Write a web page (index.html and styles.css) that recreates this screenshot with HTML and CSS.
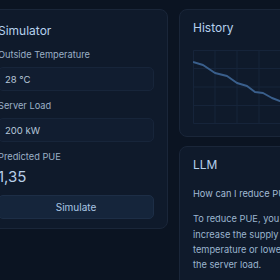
FILE: index.html
```html
<!DOCTYPE html>
<html>
  <head>
    <meta charset="utf-8" />
    <meta name="viewport" content="width=device-width, initial-scale=1" />
    <title>PUE Dashboard</title>
    <link rel="stylesheet" href="styles.css">
  </head>
  <body>
    <div class="dashboard">
      <div class="card simulator">
        <h2 class="card-title">Simulator</h2>

        <div class="field">
          <label class="field-label" for="tempInput">Outside Temperature</label>
          <input type="text" id="tempInput" class="field-input" value="28 °C" />
        </div>

        <div class="field">
          <label class="field-label" for="loadInput">Server Load</label>
          <input type="text" id="loadInput" class="field-input" value="200 kW" />
        </div>

        <div class="field-label">Predicted PUE</div>
        <div class="pue-value">1,35</div>

        <button class="simulate-btn">Simulate</button>
      </div>

      <div class="side">
        <div class="card history">
          <h2 class="card-title">History</h2>
          <svg class="chart" viewBox="0 0 100 74" preserveAspectRatio="none">
            <g class="grid">
              <line x1="22" y1="0" x2="22" y2="74" />
              <line x1="44" y1="0" x2="44" y2="74" />
              <line x1="66" y1="0" x2="66" y2="74" />
              <line x1="88" y1="0" x2="88" y2="74" />
              <line x1="0" y1="18.5" x2="100" y2="18.5" />
              <line x1="0" y1="37" x2="100" y2="37" />
              <line x1="0" y1="55.5" x2="100" y2="55.5" />
              <rect x="0.5" y="0.5" width="99" height="73" />
            </g>
            <polyline
              class="trend"
              points="0,12 10,15 22,23 34,26 44,33 54,36 62,42 70,43 79,48 87,51 95,54 100,55"
            />
          </svg>
        </div>

        <div class="card llm">
          <h2 class="card-title">LLM</h2>
          <p class="question">How can I reduce PUE?</p>
          <p class="answer">
            To reduce PUE, you increase the supply temperature or lower the
            server load.
          </p>
        </div>
      </div>
    </div>
  </body>
</html>
```

FILE: styles.css
```css
body {
  margin: 0;
  padding: 0;
  width: 280px;
  height: 280px;
  overflow: hidden;
  font-family: Inter, "Noto Sans", sans-serif;
  background: #0b1422;
  color: #9fb4ca;
}

.dashboard {
  display: flex;
  align-items: flex-start;
  gap: 11px;
  width: max-content;
  padding-top: 9px;
  margin-left: -16px;
}

.card {
  box-sizing: border-box;
  background: #0f1a2b;
  border: 1px solid #1a2639;
  border-radius: 8px;
}

.card-title {
  margin: 0;
  font-size: 12px;
  line-height: 15px;
  font-weight: 400;
  color: #b6d1ee;
}

.simulator {
  width: 184px;
  padding: 13px 13px 9px;
  display: flex;
  flex-direction: column;
}

.simulator .card-title {
  margin-bottom: 10px;
}

.field {
  margin-bottom: 8px;
}

.field-label {
  display: block;
  font-size: 9.25px;
  line-height: 13px;
  color: #9cb1c7;
  margin-bottom: 6px;
}

.field-input {
  display: block;
  width: 100%;
  height: 24px;
  box-sizing: border-box;
  padding: 0 6px;
  border: 1px solid #17253a;
  border-radius: 5px;
  background: #111d30;
  color: #b7c7d9;
  font-family: inherit;
  font-size: 9.5px;
  outline: none;
}

.pue-value {
  font-size: 15px;
  line-height: 18px;
  color: #b8cfe8;
  margin-top: -1px;
}

.simulate-btn {
  margin-top: 9px;
  height: 24px;
  border: 1px solid #1d2e46;
  border-radius: 5px;
  background: #15253b;
  color: #a9c5e4;
  font-family: inherit;
  font-size: 10px;
  cursor: pointer;
}

.side {
  width: 128px;
  display: flex;
  flex-direction: column;
  gap: 9px;
}

.history,
.llm {
  padding: 10px 13px 12px;
}

.chart {
  display: block;
  width: 100%;
  height: 74px;
  margin-top: 15px;
}

.grid line,
.grid rect {
  fill: none;
  stroke: #16243a;
  stroke-width: 1;
  vector-effect: non-scaling-stroke;
}

.trend {
  fill: none;
  stroke: #3a5f8c;
  stroke-width: 2;
  stroke-linejoin: round;
  vector-effect: non-scaling-stroke;
}

.llm {
  min-height: 160px;
}

.question,
.answer {
  margin: 0;
  font-size: 9.25px;
  line-height: 15.3px;
}

.question {
  margin-top: 14px;
  color: #a3bcd6;
  white-space: nowrap;
}

.answer {
  margin-top: 10px;
  color: #9cb6d0;
}
```
